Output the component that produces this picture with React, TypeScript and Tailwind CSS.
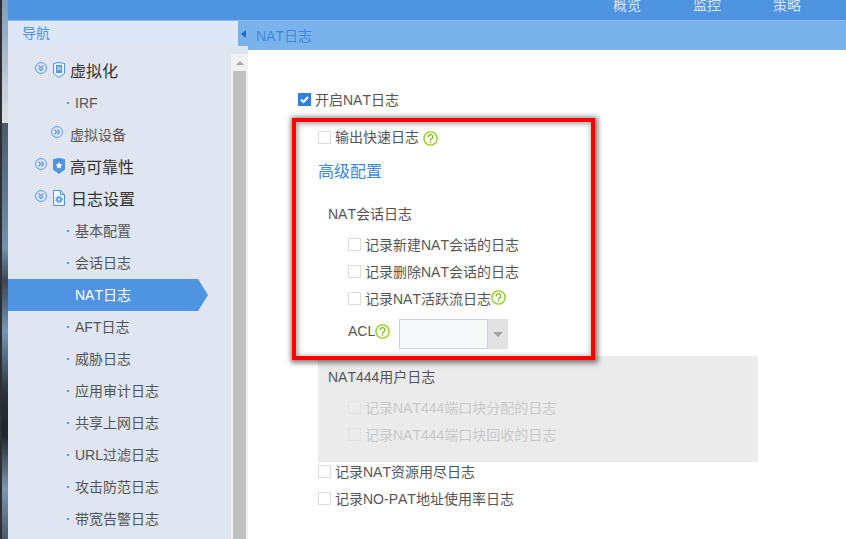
import React from "react";

const font = { fontFamily: '"Liberation Sans","Noto Sans CJK SC",sans-serif' };

function Chevrons({ down }: { down?: boolean }) {
  return (
    <svg width="12" height="12" viewBox="0 0 12 12" fill="none" stroke="#5a9ae4" className="shrink-0">
      <circle cx="6" cy="6" r="5.5" strokeWidth="1" />
      {down ? (
        <path d="M3.5 3.5L6 5.7l2.5-2.2M3.5 6.3L6 8.5l2.5-2.2" strokeWidth="1.2" />
      ) : (
        <path d="M3.5 3.5L5.7 6 3.5 8.5M6.3 3.5L8.5 6 6.3 8.5" strokeWidth="1.2" />
      )}
    </svg>
  );
}

function Shield({ kind }: { kind: "v" | "s" | "d" }) {
  if (kind === "d") {
    return (
      <svg width="12" height="16" viewBox="0 0 12 16" className="shrink-0">
        <path d="M.5.5h7l4 4v11H.5z" fill="#f3f7fd" stroke="#4f94e0" />
        <path d="M7.5.5v4h4" fill="none" stroke="#4f94e0" />
        <circle cx="6" cy="9.5" r="2" fill="none" stroke="#4f94e0" strokeWidth="1.6" />
        <circle cx="6" cy="9.5" r="3.4" fill="none" stroke="#4f94e0" strokeWidth="1" strokeDasharray="1.4 1.4" />
      </svg>
    );
  }
  return (
    <svg width="12" height="16" viewBox="0 0 12 16" className="shrink-0">
      <path d="M.5 1.5L6 .5l5.5 1v10L6 15.5.5 11.5z" fill={kind === "s" ? "#4f94e0" : "#eef3fb"} stroke="#4f94e0" />
      {kind === "s" ? (
        <path d="M6 4l1.1 2.3 2.4.3-1.8 1.6.5 2.4L6 9.4l-2.2 1.2.5-2.4L2.5 6.6l2.4-.3z" fill="#fff" />
      ) : (
        <>
          <path d="M3 3h6v8H3z" fill="#4f94e0" />
          <path d="M5 4.5v4M7 4.5v4" fill="none" stroke="#eef3fb" />
        </>
      )}
    </svg>
  );
}

function Help() {
  return (
    <svg width="15" height="15" viewBox="0 0 15 15" fill="none" className="shrink-0">
      <circle cx="7.5" cy="7.5" r="6.6" fill="#fff" stroke="#8fd019" strokeWidth="1.4" />
      <path d="M5.2 5.9a2.3 2.3 0 1 1 3.4 2c-.8.4-1.1.8-1.1 1.7" stroke="#7cb80f" strokeWidth="1.3" />
      <rect x="6.8" y="10.3" width="1.4" height="1.4" fill="#7cb80f" />
    </svg>
  );
}

function Box({ disabled }: { disabled?: boolean }) {
  return (
    <span
      className={
        "h-[13px] w-[13px] shrink-0 border " +
        (disabled ? "border-[#e2e2e2] bg-[#ebebeb]" : "border-[#dcdcdc] bg-white")
      }
    />
  );
}

function Check({
  children,
  disabled,
  className,
}: {
  children: React.ReactNode;
  disabled?: boolean;
  className?: string;
}) {
  return (
    <div className={"flex h-[27px] items-center gap-1 " + (className ?? "")}>
      <Box disabled={disabled} />
      <span className={disabled ? "text-[#c9c9c9]" : ""}>{children}</span>
    </div>
  );
}

function Leaf({ label, active }: { label: string; active?: boolean }) {
  return (
    <div
      className={
        "relative flex h-[32px] w-[190px] items-center pl-[59px] text-sm " +
        (active ? "bg-[#4f94e0] text-white" : "text-[#555]")
      }
    >
      <span className="mr-[6px] h-[2px] w-[2px] shrink-0 bg-[#4f94e0]" />
      {label}
      {active && (
        <span className="absolute left-full top-0 h-0 w-0 border-y-[16px] border-l-[10px] border-y-transparent border-l-[#4f94e0]" />
      )}
    </div>
  );
}

function Group({ label, kind, down }: { label: string; kind: "v" | "s" | "d"; down?: boolean }) {
  return (
    <div className="flex h-[32px] items-center pl-[27px] text-base text-[#333]">
      <span className="-mt-[6px] mr-[6px] flex">
        <Chevrons down={down} />
      </span>
      <span className={"-mt-[2px] flex " + (kind === "d" ? "mr-[6px]" : "mr-[5px]")}>
        <Shield kind={kind} />
      </span>
      <span className="mt-[2px]">{label}</span>
    </div>
  );
}

export default function App() {
  const leaves = ["基本配置", "会话日志", "NAT日志", "AFT日志", "威胁日志", "应用审计日志", "共享上网日志", "URL过滤日志", "攻击防范日志", "带宽告警日志"];
  return (
    <div style={font} className="relative flex h-[539px] w-[846px] overflow-hidden bg-white text-sm text-[#555] [font-kerning:none]">
      <div className="flex w-[8px] shrink-0 flex-col border-l-2 border-[#2c3036]">
        <div className="h-[123px] shrink-0 bg-gradient-to-b from-[#7f9bb5] to-[#dfe2e4]" />
        <div className="flex-1 bg-[linear-gradient(to_bottom,#4a5a68_0%,#6f93ad_30%,#3a4650_38%,#7397b8_50%,#2a3037_65%,#20252b_75%,#7c97ae_88%,#4a5a68_100%)]" />
      </div>
      <div className="flex min-w-0 flex-1 flex-col">
        <header className="flex h-[20px] shrink-0 items-start overflow-hidden bg-[#4f94e0] text-[#d6e6f8]">
          <div className="-mt-[5px] ml-auto flex pr-[45px]">
            <span className="mr-[52px]">概览</span>
            <span className="mr-[52px]">监控</span>
            <span>策略</span>
          </div>
        </header>
        <div className="flex min-h-0 flex-1 border-t border-[#8db8ea]">
          <aside className="flex w-[240px] shrink-0 flex-col bg-[#dfe5f1]">
            <div className="relative flex h-[25px] shrink-0 items-center bg-[#dde7f6] pl-[14px] text-sm text-[#4f94e0]">
              <span className="-mt-[2px]">导航</span>
              <span className="absolute right-0 top-0 flex h-[25px] w-[10px] items-center justify-center bg-[#7ab3ec]">
                <span className="h-0 w-0 border-y-[4px] border-r-[5px] border-y-transparent border-r-[#1f6fc9]" />
              </span>
            </div>
            <div className="flex min-h-0 flex-1">
              <nav className="min-w-0 flex-1 pt-[9px]">
                <Group label="虚拟化" kind="v" down />
                <div className="flex h-[32px] items-center pl-[59px] text-sm text-[#555]">
                  <span className="mr-[6px] h-[2px] w-[2px] bg-[#4f94e0]" />
                  IRF
                </div>
                <div className="flex h-[32px] items-center pl-[43px] text-sm text-[#555]">
                  <span className="-mt-[6px] mr-[7px] flex">
                    <Chevrons />
                  </span>
                  虚拟设备
                </div>
                <Group label="高可靠性" kind="s" />
                <Group label="日志设置" kind="d" down />
                {leaves.map((l) => (
                  <Leaf key={l} label={l} active={l === "NAT日志"} />
                ))}
              </nav>
              <div className="mt-[8px] flex w-[17px] shrink-0 flex-col bg-[#f1f1f1] px-[2px]">
                <div className="flex h-[17px] shrink-0 items-center justify-center">
                  <span className="h-0 w-0 border-x-[4px] border-b-[4px] border-x-transparent border-b-[#a6a6a6]" />
                </div>
                <div className="flex-1 bg-[#c0c0c0]" />
              </div>
            </div>
          </aside>
          <main className="min-w-0 flex-1">
            <div className="flex h-[29px] items-center bg-[#7ab3ec] pl-[8px] text-sm text-[#3f87db]">NAT日志</div>
            <div className="pl-[50px] pt-[36px]">
              <div className="flex h-[27px] items-center gap-[4px]">
                <span className="flex h-[13px] w-[13px] items-center justify-center bg-[#2f80e0]">
                  <svg width="11" height="11" viewBox="0 0 11 11" fill="none" stroke="#fff" strokeWidth="2">
                    <path d="M2 5.5l2.5 2.5L9 3" />
                  </svg>
                </span>
                开启NAT日志
              </div>
              <div className="pl-[20px]">
                <div className="flex h-[34px] items-center gap-[4px] pt-[14px]">
                  <Box />
                  <span>输出快速日志</span>
                  <span className="mt-[2px] flex">
                    <Help />
                  </span>
                </div>
                <div className="flex h-[37px] items-end text-base text-[#3d87dc]">高级配置</div>
                <div className="flex h-[41px] items-end pb-[1px] pl-[10px]">NAT会话日志</div>
                <div className="pl-[30px] pt-[6px]">
                  <Check>记录新建NAT会话的日志</Check>
                  <Check>记录删除NAT会话的日志</Check>
                  <Check>
                    <span className="flex items-center">
                      记录NAT活跃流日志
                      <span className="-mt-[2px] flex">
                        <Help />
                      </span>
                    </span>
                  </Check>
                  <div className="flex h-[37px] items-center pt-[7px]">
                    <span className="-mt-[6px] flex items-center">
                      ACL
                      <span className="mr-[9px] flex">
                        <Help />
                      </span>
                    </span>
                    <span className="h-[30px] w-[89px] border border-[#c6d3e6] bg-[#f7f8fa]" />
                    <span className="flex h-[30px] w-[20px] items-center justify-center bg-[#e2e2e2]">
                      <span className="h-0 w-0 border-x-[5px] border-t-[5px] border-x-transparent border-t-[#a0a0a0]" />
                    </span>
                  </div>
                </div>
                <section className="mt-[7px] h-[106px] w-[440px] bg-[#ebebeb]">
                  <div className="flex h-[42px] items-center pl-[10px]">NAT444用户日志</div>
                  <div className="pl-[30px]">
                    <Check disabled className="mt-[-4px]">记录NAT444端口块分配的日志</Check>
                    <Check disabled>记录NAT444端口块回收的日志</Check>
                  </div>
                </section>
                <Check className="-mt-[4px]">记录NAT资源用尽日志</Check>
                <Check>记录NO-PAT地址使用率日志</Check>
              </div>
            </div>
          </main>
        </div>
      </div>
      <div className="pointer-events-none absolute left-[292px] top-[118px] h-[242px] w-[303px] border-[4px] border-[#ff0000] shadow-[1px_1px_5px_2px_rgba(0,0,0,0.5),inset_1px_1px_5px_1px_rgba(0,0,0,0.35)]" />
    </div>
  );
}
